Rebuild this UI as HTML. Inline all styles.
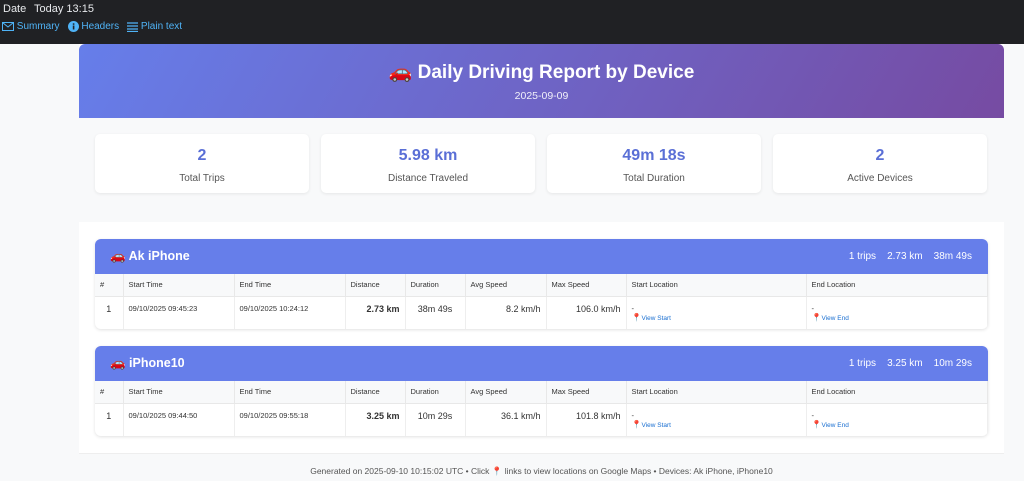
<!DOCTYPE html>
<html><head><meta charset="utf-8"><style>
*{box-sizing:border-box;margin:0;padding:0}
body{width:1024px;height:481px;overflow:hidden;background:#f8f9fa;font-family:"Liberation Sans",sans-serif;position:relative}
.top{position:absolute;left:0;top:0;width:1024px;height:44px;background:#202124;color:#e8eaed;font-size:11px}
.top .d{position:absolute;left:3px;top:3px}
.top .t{position:absolute;left:34px;top:3px}
.nav{position:absolute;top:21px;left:2px;color:#4fb3f6;font-size:10px;display:flex;align-items:center}
.nav span{display:inline-flex;align-items:center;margin-right:8px}
.main{position:absolute;left:79px;top:44px;width:925px;height:437px;background:#fff}
.hdr{height:74px;background:linear-gradient(120deg,#667eea,#764ba2);border-radius:6px 6px 0 0;color:#fff;text-align:center}
.hdr h1{font-size:19px;font-weight:bold;padding-top:18px;line-height:22px}
.hdr p{font-size:10.5px;margin-top:6px;opacity:.9}
.stats{height:104px;background:#f8f9fa;position:relative}
.card{position:absolute;top:16px;width:214px;height:59px;background:#fff;border-radius:5px;box-shadow:0 1px 3px rgba(0,0,0,.08);text-align:center}
.card b{display:block;color:#5a6fd6;font-size:16px;margin-top:13px}
.card span{display:block;color:#555;font-size:10px;margin-top:8px}
.dev{position:absolute;left:16px;width:893px;border-radius:6px;background:#fff;box-shadow:0 1px 3px rgba(0,0,0,.12);overflow:hidden}
.dh{height:35px;background:#667eea;color:#fff;position:relative}
.dh .n{position:absolute;left:15px;top:10px;font-size:12.5px;font-weight:bold}
.dh .s{position:absolute;right:16px;top:12px;font-size:10px}
.dh .s i{font-style:normal;margin-left:11px}
table{border-collapse:collapse;width:893px;table-layout:fixed;font-size:7.5px;color:#333}
th{background:#f8f9fa;height:22px;text-align:left;font-weight:normal;padding-left:5px;border-right:1px solid #e8e8e8;border-bottom:1px solid #e8e8e8}
td{height:33px;vertical-align:top;padding:7px 5px 0;border-right:1px solid #eee}
td.r{text-align:right}
td.m{font-size:9px}
a{color:#1a6fd1;text-decoration:none;font-size:6.5px}
.pin{color:#8b1a1a;font-size:8px}
.foot{position:absolute;left:0;top:409px;width:925px;height:28px;background:#f8f9fa;border-top:1px solid #eee;text-align:center;font-size:8.5px;color:#555;padding-top:12px}
</style></head><body>
<div class="top"><span class="d">Date</span><span class="t">Today 13:15</span>
<div class="nav">
<span><svg width="12" height="9" viewBox="0 0 12 9"><rect x=".5" y=".5" width="11" height="8" fill="none" stroke="#4fb3f6"/><path d="M.5 .5L6 5l5.5-4.5" fill="none" stroke="#4fb3f6"/></svg>&nbsp;Summary</span>
<span><svg width="11" height="11"><circle cx="5.5" cy="5.5" r="5.5" fill="#4fb3f6"/><rect x="4.8" y="4.5" width="1.6" height="4" fill="#202124"/><rect x="4.8" y="2.3" width="1.6" height="1.5" fill="#202124"/></svg>&nbsp;Headers</span>
<span><svg width="11" height="10"><path d="M0 1h11M0 4h11M0 7h11M0 9.5h11" stroke="#4fb3f6" stroke-width="1.3"/></svg>&nbsp;Plain text</span>
</div></div>
<div class="main">
<div class="hdr"><h1>🚗 Daily Driving Report by Device</h1><p>2025-09-09</p></div>
<div class="stats">
<div class="card" style="left:16px"><b>2</b><span>Total Trips</span></div>
<div class="card" style="left:242px"><b>5.98 km</b><span>Distance Traveled</span></div>
<div class="card" style="left:468px"><b>49m 18s</b><span>Total Duration</span></div>
<div class="card" style="left:694px"><b>2</b><span>Active Devices</span></div>
</div>
<div class="dev" style="top:195px">
<div class="dh"><span class="n">🚗 Ak iPhone</span><span class="s">1 trips<i>2.73 km</i><i>38m 49s</i></span></div>
<table><colgroup><col style="width:28px"><col style="width:111px"><col style="width:111px"><col style="width:60px"><col style="width:60px"><col style="width:81px"><col style="width:80px"><col style="width:180px"><col></colgroup>
<tr><th>#</th><th>Start Time</th><th>End Time</th><th>Distance</th><th>Duration</th><th>Avg Speed</th><th>Max Speed</th><th>Start Location</th><th>End Location</th></tr>
<tr><td class="m" style="text-align:center">1</td><td>09/10/2025 09:45:23</td><td>09/10/2025 10:24:12</td><td class="r m"><b>2.73 km</b></td><td class="m" style="text-align:center">38m 49s</td><td class="r m">8.2 km/h</td><td class="r m">106.0 km/h</td><td>-<br><span class="pin">📍</span><a>View Start</a></td><td>-<br><span class="pin">📍</span><a>View End</a></td></tr>
</table></div>
<div class="dev" style="top:302px">
<div class="dh"><span class="n">🚗 iPhone10</span><span class="s">1 trips<i>3.25 km</i><i>10m 29s</i></span></div>
<table><colgroup><col style="width:28px"><col style="width:111px"><col style="width:111px"><col style="width:60px"><col style="width:60px"><col style="width:81px"><col style="width:80px"><col style="width:180px"><col></colgroup>
<tr><th>#</th><th>Start Time</th><th>End Time</th><th>Distance</th><th>Duration</th><th>Avg Speed</th><th>Max Speed</th><th>Start Location</th><th>End Location</th></tr>
<tr><td class="m" style="text-align:center">1</td><td>09/10/2025 09:44:50</td><td>09/10/2025 09:55:18</td><td class="r m"><b>3.25 km</b></td><td class="m" style="text-align:center">10m 29s</td><td class="r m">36.1 km/h</td><td class="r m">101.8 km/h</td><td>-<br><span class="pin">📍</span><a>View Start</a></td><td>-<br><span class="pin">📍</span><a>View End</a></td></tr>
</table></div>
<div class="foot">Generated on 2025-09-10 10:15:02 UTC • Click 📍 links to view locations on Google Maps • Devices: Ak iPhone, iPhone10</div>
</div>
</body></html>
